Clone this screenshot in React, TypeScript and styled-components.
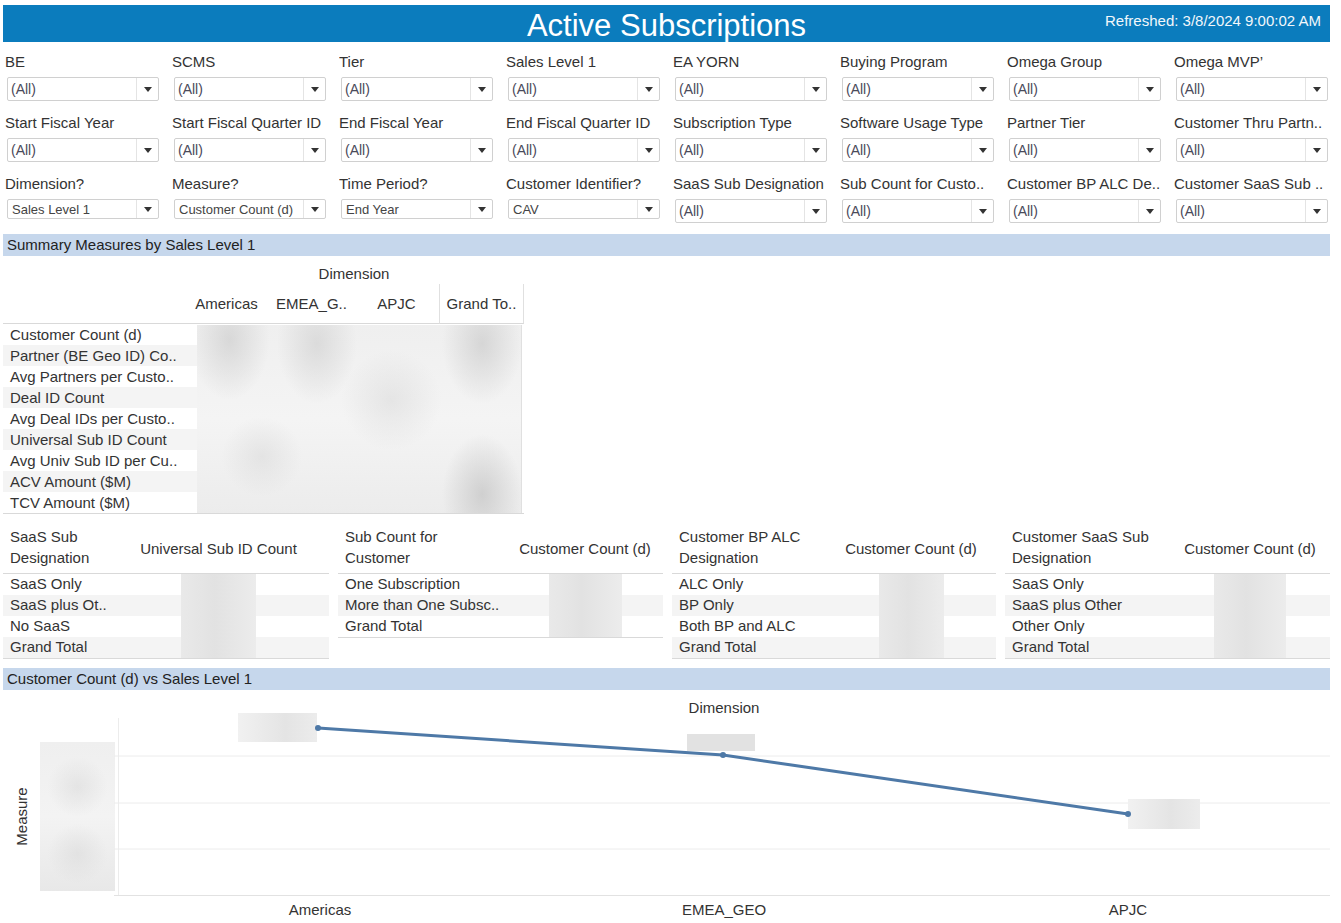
import React from 'react';
import styled, { createGlobalStyle } from 'styled-components';

const GlobalStyle = createGlobalStyle`
	body {
		margin: 0;
		background: #ffffff;
		font-family: 'Liberation Sans', Arial, sans-serif;
		color: #333333;
	}
`;

const Page = styled.div`
	width: 1341px;
	padding: 5px 11px 0 3px;
	box-sizing: border-box;
`;

const TitleBar = styled.header`
	height: 37px;
	background: #0b7cbd;
	display: grid;
	grid-template-columns: 1fr auto 1fr;
	align-items: center;
	color: #ffffff;
`;

const Title = styled.h1`
	grid-column: 2;
	margin: 0;
	font-size: 31px;
	font-weight: 400;
	line-height: 37px;
	padding-top: 2px;
`;

const Refreshed = styled.div`
	justify-self: end;
	align-self: start;
	padding: 7px 9px 0 0;
	font-size: 15px;
	color: #f2f7fb;
`;

const FilterGrid = styled.div`
	display: grid;
	grid-template-columns: repeat(8, 167px);
	grid-auto-rows: 61px;
	margin-top: 10px;
	height: 182px;
`;

const FilterCell = styled.div`
	display: flex;
	flex-direction: column;
	padding-left: 2px;
`;

const FilterLabel = styled.div`
	height: 20px;
	line-height: 20px;
	font-size: 15px;
	color: #333333;
	white-space: nowrap;
	overflow: hidden;
`;

const Select = styled.div<{ $compact?: boolean }>`
	margin-top: 5px;
	margin-left: 2px;
	width: 152px;
	height: ${(p) => (p.$compact ? '20px' : '24px')};
	border: 1px solid #d0d0d0;
	border-radius: 2px;
	box-sizing: border-box;
	display: flex;
	align-items: center;
	background: #ffffff;
`;

const SelectValue = styled.span<{ $compact?: boolean }>`
	flex: 1;
	padding-left: ${(p) => (p.$compact ? '4px' : '3px')};
	font-size: ${(p) => (p.$compact ? '13px' : '14px')};
	color: ${(p) => (p.$compact ? '#444444' : '#4a4a5a')};
	white-space: nowrap;
	overflow: hidden;
`;

const SelectArrow = styled.span`
	width: 21px;
	align-self: stretch;
	border-left: 1px solid #e4e4e4;
	display: flex;
	align-items: center;
	justify-content: center;
	&::after {
		content: '';
		border-left: 4px solid transparent;
		border-right: 4px solid transparent;
		border-top: 5px solid #333333;
	}
`;

const SectionBar = styled.div<{ $top: number }>`
	margin-top: ${(p) => p.$top}px;
	height: 22px;
	line-height: 22px;
	background: #c6d7ec;
	padding-left: 4px;
	font-size: 15px;
	color: #222222;
`;

const SummaryGrid = styled.div`
	display: grid;
	grid-template-columns: 181px repeat(4, 85px);
	grid-template-rows: 20px 40px repeat(9, 21px);
	margin-top: 8px;
	width: 521px;
	border-bottom: 1px solid #d9d9d9;
`;

const DimTitle = styled.div`
	grid-column: 2 / span 4;
	text-align: center;
	font-size: 15px;
	line-height: 20px;
`;

const ColHead = styled.div<{ $divider?: boolean; $last?: boolean }>`
	display: flex;
	align-items: center;
	justify-content: center;
	font-size: 15px;
	border-bottom: 1px solid #d9d9d9;
	border-left: ${(p) => (p.$divider ? '1px solid #e0e0e0' : 'none')};
	border-right: ${(p) => (p.$last ? '1px solid #e0e0e0' : 'none')};
	white-space: nowrap;
`;

const CornerHead = styled.div`
	border-bottom: 1px solid #d9d9d9;
`;

const RowLabel = styled.div<{ $shade: boolean }>`
	grid-column: 1 / span 2;
	background: ${(p) => (p.$shade ? '#f4f4f4' : '#ffffff')};
	padding-left: 7px;
	font-size: 15px;
	line-height: 21px;
	white-space: nowrap;
	overflow: hidden;
`;

const SummaryBlur = styled.div`
	grid-column: 2 / span 4;
	grid-row: 3 / span 9;
	margin: 1px 2px 0 13px;
	background:
		radial-gradient(ellipse 40px 60px at 10% 8%, rgba(200, 200, 200, 0.6), transparent),
		radial-gradient(ellipse 40px 60px at 37% 10%, rgba(205, 205, 205, 0.6), transparent),
		radial-gradient(ellipse 40px 60px at 88% 10%, rgba(200, 200, 200, 0.65), transparent),
		radial-gradient(ellipse 50px 50px at 60% 40%, rgba(215, 215, 215, 0.5), transparent),
		radial-gradient(ellipse 40px 60px at 88% 90%, rgba(195, 195, 195, 0.7), transparent),
		radial-gradient(ellipse 40px 40px at 20% 70%, rgba(215, 215, 215, 0.5), transparent),
		linear-gradient(180deg, #efefef, #f4f4f4 50%, #ececec);
	border-right: 1px solid #e0e0e0;
`;

const SmallTables = styled.div`
	display: grid;
	grid-template-columns: 326px 325px 324px 325px;
	column-gap: 9px;
	margin-top: 11px;
	align-items: start;
`;

const SmallTable = styled.div<{ $labelW: number; $rows: number }>`
	display: grid;
	grid-template-columns: ${(p) => p.$labelW}px 1fr;
	grid-template-rows: 49px repeat(${(p) => p.$rows}, 21px);
	border-bottom: 1px solid #d9d9d9;
`;

const SmallHeadLabel = styled.div`
	padding: 1px 0 0 7px;
	font-size: 15px;
	line-height: 21px;
	border-bottom: 1px solid #d9d9d9;
`;

const SmallHeadValue = styled.div`
	display: flex;
	align-items: center;
	justify-content: center;
	font-size: 15px;
	border-bottom: 1px solid #d9d9d9;
	white-space: nowrap;
	padding-bottom: 2px;
`;

const SmallRow = styled.div<{ $shade: boolean }>`
	grid-column: 1 / span 2;
	background: ${(p) => (p.$shade ? '#f4f4f4' : '#ffffff')};
	padding-left: 7px;
	font-size: 15px;
	line-height: 20px;
	white-space: nowrap;
`;

const SmallBlur = styled.div<{ $rows: number; $w: number }>`
	grid-column: 2;
	grid-row: 2 / span ${(p) => p.$rows};
	justify-self: center;
	width: ${(p) => p.$w}px;
	background: linear-gradient(90deg, #e9e9e9, #e2e2e2 45%, #ececec);
`;

const ChartArea = styled.div`
	display: grid;
	grid-template-columns: 37px 78px 1fr;
	grid-template-rows: 20px 178px 26px;
	margin-top: 8px;
`;

const ChartTitle = styled.div`
	grid-column: 3;
	text-align: center;
	font-size: 15px;
	line-height: 20px;
`;

const AxisTitle = styled.div`
	grid-column: 1;
	grid-row: 2;
	display: flex;
	align-items: center;
	justify-content: center;
	span {
		transform: rotate(-90deg);
		font-size: 15px;
		white-space: nowrap;
		margin-top: 18px;
	}
`;

const AxisLabels = styled.div`
	grid-column: 2;
	grid-row: 2;
	padding: 24px 3px 5px 0;
	display: flex;
	span {
		flex: 1;
		background:
			radial-gradient(ellipse 30px 30px at 50% 30%, rgba(215, 215, 215, 0.5), transparent),
			radial-gradient(ellipse 30px 30px at 50% 75%, rgba(215, 215, 215, 0.5), transparent),
			linear-gradient(180deg, #efefef, #f3f3f3 50%, #e8e8e8);
	}
`;

const Plot = styled.svg`
	grid-column: 3;
	grid-row: 2;
	overflow: visible;
	display: block;
`;

const XLabels = styled.div`
	grid-column: 3;
	display: grid;
	grid-template-columns: repeat(3, 1fr);
	align-items: center;
	font-size: 15px;
	span {
		text-align: center;
	}
`;

const filterRows: { label: string; value: string; compact?: boolean }[][] = [
	[
		{ label: 'BE', value: '(All)' },
		{ label: 'SCMS', value: '(All)' },
		{ label: 'Tier', value: '(All)' },
		{ label: 'Sales Level 1', value: '(All)' },
		{ label: 'EA YORN', value: '(All)' },
		{ label: 'Buying Program', value: '(All)' },
		{ label: 'Omega Group', value: '(All)' },
		{ label: 'Omega MVP\u2019', value: '(All)' },
	],
	[
		{ label: 'Start Fiscal Year', value: '(All)' },
		{ label: 'Start Fiscal Quarter ID', value: '(All)' },
		{ label: 'End Fiscal Year', value: '(All)' },
		{ label: 'End Fiscal Quarter ID', value: '(All)' },
		{ label: 'Subscription Type', value: '(All)' },
		{ label: 'Software Usage Type', value: '(All)' },
		{ label: 'Partner Tier', value: '(All)' },
		{ label: 'Customer Thru Partn..', value: '(All)' },
	],
	[
		{ label: 'Dimension?', value: 'Sales Level 1', compact: true },
		{ label: 'Measure?', value: 'Customer Count (d)', compact: true },
		{ label: 'Time Period?', value: 'End Year', compact: true },
		{ label: 'Customer Identifier?', value: 'CAV', compact: true },
		{ label: 'SaaS Sub Designation', value: '(All)' },
		{ label: 'Sub Count for Custo..', value: '(All)' },
		{ label: 'Customer BP ALC De..', value: '(All)' },
		{ label: 'Customer SaaS Sub ..', value: '(All)' },
	],
];

const summaryRows = [
	'Customer Count (d)',
	'Partner (BE Geo ID) Co..',
	'Avg Partners per Custo..',
	'Deal ID Count',
	'Avg Deal IDs per Custo..',
	'Universal Sub ID Count',
	'Avg Univ Sub ID per Cu..',
	'ACV Amount ($M)',
	'TCV Amount ($M)',
];

const smallTables = [
	{
		head: ['SaaS Sub', 'Designation'],
		measure: 'Universal Sub ID Count',
		labelW: 105,
		blurW: 75,
		rows: ['SaaS Only', 'SaaS plus Ot..', 'No SaaS', 'Grand Total'],
	},
	{
		head: ['Sub Count for', 'Customer'],
		measure: 'Customer Count (d)',
		labelW: 169,
		blurW: 73,
		rows: ['One Subscription', 'More than One Subsc..', 'Grand Total'],
	},
	{
		head: ['Customer BP ALC', 'Designation'],
		measure: 'Customer Count (d)',
		labelW: 154,
		blurW: 65,
		rows: ['ALC Only', 'BP Only', 'Both BP and ALC', 'Grand Total'],
	},
	{
		head: ['Customer SaaS Sub', 'Designation'],
		measure: 'Customer Count (d)',
		labelW: 165,
		blurW: 72,
		rows: ['SaaS Only', 'SaaS plus Other', 'Other Only', 'Grand Total'],
	},
];

const points = [
	{ x: 200, y: 10 },
	{ x: 605, y: 37 },
	{ x: 1010, y: 96 },
];

const LineChart = () => (
	<Plot width="1212" height="178" viewBox="0 0 1212 178">
		<defs>
			<linearGradient id="lbl" x1="0" x2="1" y1="0" y2="0">
				<stop offset="0" stopColor="#f1f1f1" />
				<stop offset="0.6" stopColor="#e4e4e4" />
				<stop offset="1" stopColor="#ececec" />
			</linearGradient>
		</defs>
		<line x1="0.5" y1="0" x2="0.5" y2="178" stroke="#ececec" />
		{[38, 85, 131].map((y) => (
			<line key={y} x1="-4" y1={y} x2="1212" y2={y} stroke="#ececec" />
		))}
		<line x1="-4" y1="177.5" x2="1212" y2="177.5" stroke="#e2e2e2" />
		<rect x="120" y="-5" width="79" height="29" fill="url(#lbl)" />
		<rect x="569" y="16" width="68" height="17" fill="#e2e2e2" />
		<rect x="1010" y="81" width="72" height="30" fill="url(#lbl)" />
		<polyline
			points={points.map((p) => `${p.x},${p.y}`).join(' ')}
			fill="none"
			stroke="#4e79a7"
			strokeWidth="3"
		/>
		{points.map((p) => (
			<circle key={p.x} cx={p.x} cy={p.y} r="3" fill="#4e79a7" />
		))}
	</Plot>
);

const App = () => {
	return (
		<Page>
			<GlobalStyle />
			<TitleBar>
				<Title>Active Subscriptions</Title>
				<Refreshed>Refreshed: 3/8/2024 9:00:02 AM</Refreshed>
			</TitleBar>

			<FilterGrid>
				{filterRows.flat().map((f, i) => (
					<FilterCell key={i}>
						<FilterLabel>{f.label}</FilterLabel>
						<Select $compact={f.compact}>
							<SelectValue $compact={f.compact}>{f.value}</SelectValue>
							<SelectArrow />
						</Select>
					</FilterCell>
				))}
			</FilterGrid>

			<SectionBar $top={0}>Summary Measures by Sales Level 1</SectionBar>
			<SummaryGrid>
				<div />
				<DimTitle>Dimension</DimTitle>
				<CornerHead />
				<ColHead>Americas</ColHead>
				<ColHead>EMEA_G..</ColHead>
				<ColHead>APJC</ColHead>
				<ColHead $divider $last>
					Grand To..
				</ColHead>
				{summaryRows.map((r, i) => (
					<RowLabel key={r} $shade={i % 2 === 1} style={{ gridRow: i + 3 }}>
						{r}
					</RowLabel>
				))}
				<SummaryBlur />
			</SummaryGrid>

			<SmallTables>
				{smallTables.map((t) => (
					<SmallTable key={t.head[0]} $labelW={t.labelW} $rows={t.rows.length}>
						<SmallHeadLabel>
							{t.head[0]}
							<br />
							{t.head[1]}
						</SmallHeadLabel>
						<SmallHeadValue>{t.measure}</SmallHeadValue>
						{t.rows.map((r, i) => (
							<SmallRow key={r} $shade={i % 2 === 1} style={{ gridRow: i + 2 }}>
								{r}
							</SmallRow>
						))}
						<SmallBlur $rows={t.rows.length} $w={t.blurW} />
					</SmallTable>
				))}
			</SmallTables>

			<SectionBar $top={9}>Customer Count (d) vs Sales Level 1</SectionBar>
			<ChartArea>
				<ChartTitle>Dimension</ChartTitle>
				<AxisTitle>
					<span>Measure</span>
				</AxisTitle>
				<AxisLabels>
					<span />
				</AxisLabels>
				<LineChart />
				<XLabels>
					<span>Americas</span>
					<span>EMEA_GEO</span>
					<span>APJC</span>
				</XLabels>
			</ChartArea>
		</Page>
	);
};

export default App;
